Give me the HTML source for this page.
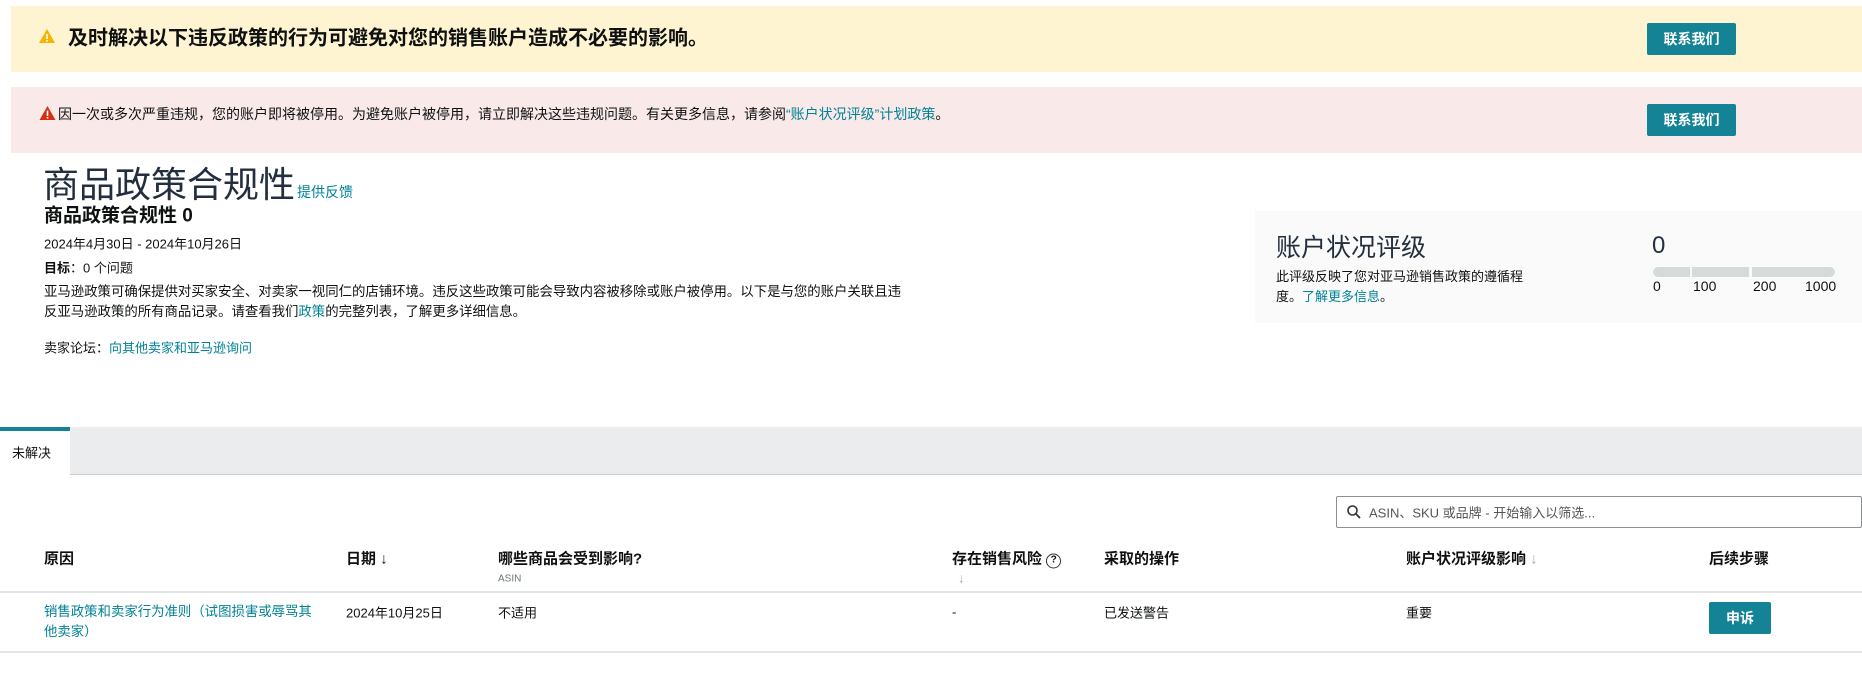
<!DOCTYPE html>
<html><head><meta charset="utf-8"><style>
*{margin:0;padding:0;box-sizing:border-box}
body{width:1862px;height:694px;overflow:hidden;background:#fff;font-family:"Liberation Sans","Noto Sans CJK SC",sans-serif;color:#0f1111;position:relative;font-size:14px}
.a{position:absolute;white-space:nowrap}
a,.l{color:#008296;text-decoration:none}
.btn{position:absolute;background:#148396;color:#fff;border-radius:2px;font-size:14px;display:flex;align-items:center;justify-content:center;font-weight:bold}
.mid{transform:translateY(-50%)}
</style></head><body>
<div class="a" style="left:11px;top:6px;width:1851px;height:66px;background:#fef4d1"></div>
<svg class="a" style="left:38px;top:28px" width="18" height="16" viewBox="0 0 18 16"><path d="M9 1L17 15H1Z" fill="#f5b400"/><rect x="8.2" y="6" width="1.6" height="5" fill="#fff"/><rect x="8.2" y="12" width="1.6" height="1.6" fill="#fff"/></svg>
<div class="a mid" style="left:68px;top:36px;font-size:20px;font-weight:bold">及时解决以下违反政策的行为可避免对您的销售账户造成不必要的影响。</div>
<div class="btn" style="left:1647px;top:23px;width:89px;height:32px">联系我们</div>

<div class="a" style="left:11px;top:87px;width:1851px;height:66px;background:#f9e9e9"></div>
<svg class="a" style="left:39px;top:105px" width="17" height="16" viewBox="0 0 17 16"><path d="M8.5 1L16.5 15H0.5Z" fill="#d13212"/><rect x="7.7" y="5.5" width="1.6" height="5.5" fill="#fff"/><rect x="7.7" y="12" width="1.6" height="1.6" fill="#fff"/></svg>
<div class="a mid" style="left:58px;top:114px;font-size:14px">因一次或多次严重违规，您的账户即将被停用。为避免账户被停用，请立即解决这些违规问题。有关更多信息，请参阅<span class="l">“账户状况评级”计划政策</span>。</div>
<div class="btn" style="left:1647px;top:104px;width:89px;height:32px">联系我们</div>

<div class="a mid" style="left:43px;top:182px;font-size:36px;color:#232f3e">商品政策合规性<span class="l" style="font-size:14px;margin-left:2px">提供反馈</span></div>
<div class="a mid" style="left:44px;top:214px;font-size:19px;font-weight:bold">商品政策合规性 0</div>
<div class="a mid" style="left:44px;top:243px;font-size:13px">2024年4月30日 - 2024年10月26日</div>
<div class="a mid" style="left:44px;top:267px;font-size:13px"><b>目标</b>：0 个问题</div>
<div class="a" style="left:44px;top:282px;font-size:13.4px;line-height:20px">亚马逊政策可确保提供对买家安全、对卖家一视同仁的店铺环境。违反这些政策可能会导致内容被移除或账户被停用。以下是与您的账户关联且违<br>反亚马逊政策的所有商品记录。请查看我们<span class="l">政策</span>的完整列表，了解更多详细信息。</div>
<div class="a mid" style="left:44px;top:347px;font-size:13px">卖家论坛：<span class="l">向其他卖家和亚马逊询问</span></div>

<div class="a" style="left:1255px;top:211px;width:607px;height:112px;background:#fafafa"></div>
<div class="a mid" style="left:1276px;top:246px;font-size:25px;color:#232f3e">账户状况评级</div>
<div class="a" style="left:1276px;top:267px;width:270px;white-space:normal;font-size:13px;line-height:20px">此评级反映了您对亚马逊销售政策的遵循程度。<span class="l">了解更多信息</span>。</div>
<div class="a mid" style="left:1652px;top:246px;font-size:24px;color:#232f3e">0</div>
<div class="a" style="left:1653px;top:267px;width:37px;height:10px;background:#d5dbdb;border-radius:5px 0 0 5px"></div>
<div class="a" style="left:1692px;top:267px;width:57px;height:10px;background:#d5dbdb"></div>
<div class="a" style="left:1752px;top:267px;width:83px;height:10px;background:#d5dbdb;border-radius:0 5px 5px 0"></div>
<div class="a mid" style="left:1653px;top:286px;font-size:14px">0</div>
<div class="a mid" style="left:1693px;top:286px;font-size:14px">100</div>
<div class="a mid" style="left:1753px;top:286px;font-size:14px">200</div>
<div class="a mid" style="left:1805px;top:286px;font-size:14px">1000</div>

<div class="a" style="left:70px;top:427px;width:1792px;height:48px;background:#ebecee;border-bottom:1px solid #ccc"></div>
<div class="a" style="left:0;top:427px;width:70px;height:4px;background:#148396"></div>
<div class="a mid" style="left:12px;top:452px;font-size:13px">未解决</div>

<div class="a" style="left:1336px;top:496px;width:526px;height:32px;border:1px solid #8d9096;border-radius:2px"></div>
<svg class="a" style="left:1346px;top:504px" width="16" height="16" viewBox="0 0 16 16"><circle cx="6.5" cy="6.5" r="4.5" fill="none" stroke="#333" stroke-width="1.6"/><path d="M10 10L14 14" stroke="#333" stroke-width="1.8"/></svg>
<div class="a mid" style="left:1369px;top:512px;font-size:13px;color:#555">ASIN、SKU 或品牌 - 开始输入以筛选...</div>

<div class="a mid" style="left:44px;top:558px;font-size:15px;font-weight:bold">原因</div>
<div class="a mid" style="left:346px;top:558px;font-size:15px;font-weight:bold">日期 <span style="font-weight:normal">↓</span></div>
<div class="a mid" style="left:498px;top:558px;font-size:15px;font-weight:bold">哪些商品会受到影响?</div>
<div class="a mid" style="left:498px;top:579px;font-size:10px;color:#6c7778">ASIN</div>
<div class="a mid" style="left:952px;top:558px;font-size:15px;font-weight:bold">存在销售风险 <span style="display:inline-block;width:15px;height:15px;border:1.5px solid #333;border-radius:50%;font-size:10px;text-align:center;line-height:12px;vertical-align:1px">?</span></div>
<div class="a mid" style="left:958px;top:578px;font-size:13px;color:#aab">↓</div>
<div class="a mid" style="left:1104px;top:558px;font-size:15px;font-weight:bold">采取的操作</div>
<div class="a mid" style="left:1406px;top:558px;font-size:15px;font-weight:bold">账户状况评级影响 <span style="font-weight:normal;color:#aab">↓</span></div>
<div class="a mid" style="left:1709px;top:558px;font-size:15px;font-weight:bold">后续步骤</div>
<div class="a" style="left:0;top:591px;width:1862px;height:2px;background:#e3e6e6"></div>

<div class="a l" style="left:44px;top:602px;font-size:13.4px;line-height:20px">销售政策和卖家行为准则（试图损害或辱骂其<br>他卖家）</div>
<div class="a mid" style="left:346px;top:612px;font-size:13px">2024年10月25日</div>
<div class="a mid" style="left:498px;top:612px;font-size:13px">不适用</div>
<div class="a mid" style="left:952px;top:612px;font-size:13px">-</div>
<div class="a mid" style="left:1104px;top:612px;font-size:13px">已发送警告</div>
<div class="a mid" style="left:1406px;top:612px;font-size:13px">重要</div>
<div class="btn" style="left:1709px;top:602px;width:62px;height:32px">申诉</div>
<div class="a" style="left:0;top:651px;width:1862px;height:2px;background:#e3e6e6"></div>
</body></html>
